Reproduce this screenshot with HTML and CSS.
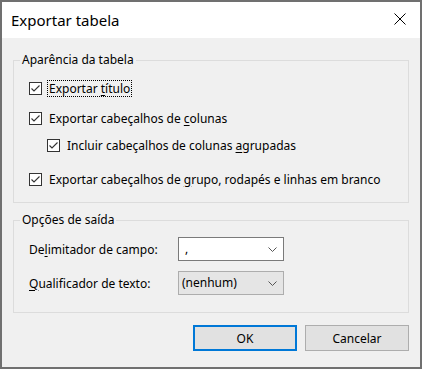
FILE: index.html
```html
<!DOCTYPE html>
<html lang="pt-BR">
<head>
  <meta charset="UTF-8" />
  <title>Exportar tabela</title>
  <link rel="stylesheet" href="styles.css">
</head>
<body>

  <div class="janela">
    <!-- BARRA DE TITULO -->
    <div class="titulo">
      <span class="titulo-texto">Exportar tabela</span>
      <span class="fechar" title="Fechar">
        <svg width="12" height="12" viewBox="0 0 12 12">
          <path d="M0.5 0.5 L11.5 11.5 M11.5 0.5 L0.5 11.5" stroke="#000" stroke-width="1" fill="none"/>
        </svg>
      </span>
    </div>

    <div class="conteudo">
      <fieldset class="grupo grupo-aparencia">
        <legend>Aparência da tabela</legend>

        <label class="opcao linha-1">
          <span class="caixa"><svg width="11" height="11" viewBox="0 0 11 11"><path d="M1.5 5.5 L4 8 L9.5 2.5" stroke="#333" stroke-width="1.1" fill="none"/></svg></span>
          <span class="rotulo foco">Exportar <u>t</u>ítulo</span>
        </label>

        <label class="opcao linha-2">
          <span class="caixa"><svg width="11" height="11" viewBox="0 0 11 11"><path d="M1.5 5.5 L4 8 L9.5 2.5" stroke="#333" stroke-width="1.1" fill="none"/></svg></span>
          <span class="rotulo">Exportar cabeçalhos de <u>c</u>olunas</span>
        </label>

        <label class="opcao linha-3 recuo">
          <span class="caixa"><svg width="11" height="11" viewBox="0 0 11 11"><path d="M1.5 5.5 L4 8 L9.5 2.5" stroke="#333" stroke-width="1.1" fill="none"/></svg></span>
          <span class="rotulo">Incluir cabeçalhos de colunas <u>a</u>grupadas</span>
        </label>

        <label class="opcao linha-4">
          <span class="caixa"><svg width="11" height="11" viewBox="0 0 11 11"><path d="M1.5 5.5 L4 8 L9.5 2.5" stroke="#333" stroke-width="1.1" fill="none"/></svg></span>
          <span class="rotulo">Exportar cabeçalhos de <u>g</u>rupo, rodapés e linhas em branco</span>
        </label>
      </fieldset>

      <fieldset class="grupo grupo-saida">
        <legend>Opções de saída</legend>

        <div class="campo campo-1">
          <span class="campo-rotulo">De<u>l</u>imitador de campo:</span>
          <div class="combo">
            <span class="combo-valor">,</span>
            <svg class="seta" width="9" height="5" viewBox="0 0 9 5"><path d="M0.5 0.5 L4.5 4.5 L8.5 0.5" stroke="#555" stroke-width="1" fill="none"/></svg>
          </div>
        </div>

        <div class="campo campo-2">
          <span class="campo-rotulo"><u>Q</u>ualificador de texto:</span>
          <div class="combo combo-lista">
            <span class="combo-valor">(nenhum)</span>
            <svg class="seta" width="9" height="5" viewBox="0 0 9 5"><path d="M0.5 0.5 L4.5 4.5 L8.5 0.5" stroke="#555" stroke-width="1" fill="none"/></svg>
          </div>
        </div>
      </fieldset>

      <div class="botoes">
        <button class="btn btn-ok">OK</button>
        <button class="btn">Cancelar</button>
      </div>
    </div>
  </div>

</body>
</html>
```

FILE: styles.css
```css
* {
  margin: 0;
  padding: 0;
  box-sizing: border-box;
}

body {
  font-family: 'Noto Sans', 'Open Sans', sans-serif;
  font-size: 12px;
  color: #000;
  background: #707070;
}

.janela {
  width: 422px;
  height: 369px;
  border: 2px solid #707070;
  display: flex;
  flex-direction: column;
}

/* barra de titulo */
.titulo {
  height: 36px;
  background: #fff;
  display: flex;
  align-items: center;
  justify-content: space-between;
  padding: 0 14px 0 9px;
}

.titulo-texto {
  font-size: 15px;
  padding-bottom: 1px;
}

.fechar {
  display: flex;
  padding-bottom: 2px;
}

.conteudo {
  flex: 1;
  background: #f0f0f0;
  padding: 14px 11px 0 11px;
}

/* grupos */
.grupo {
  border: 1px solid #dcdcdc;
  padding: 0 15px;
}

.grupo legend {
  margin-left: -9px;
  padding: 0 2px;
  line-height: 16px;
}

.grupo-aparencia {
  padding-bottom: 14px;
}

.grupo-saida {
  margin-top: 9px;
  padding-bottom: 17px;
}

/* checkboxes */
.opcao {
  display: flex;
  align-items: center;
  height: 18px;
}

.linha-1 { margin-top: 11px; }
.linha-2 { margin-top: 12px; }
.linha-3 { margin-top: 9px; }
.linha-4 { margin-top: 16px; }

.recuo {
  padding-left: 18px;
}

.caixa {
  width: 13px;
  height: 13px;
  border: 1px solid #333;
  background: #fff;
  display: flex;
  align-items: center;
  justify-content: center;
  margin-right: 5px;
}

.rotulo {
  border: 1px dotted transparent;
  padding: 0 1px;
  line-height: 15px;
}

.rotulo.foco {
  border-color: #000;
}

u {
  text-decoration-thickness: 1px;
  text-underline-offset: 2px;
}

/* campos */
.campo {
  display: flex;
  align-items: center;
}

.campo-1 { margin-top: 9px; }
.campo-2 { margin-top: 10px; }

.campo-rotulo {
  width: 149px;
}

.combo {
  width: 106px;
  height: 24px;
  background: #fff;
  border: 1px solid #7a7a7a;
  display: flex;
  align-items: center;
  justify-content: space-between;
  padding: 0 6px 0 6px;
}

.combo-lista {
  background: #e5e5e5;
  border-color: #adadad;
  padding-left: 3px;
}

.combo-valor {
  padding-bottom: 1px;
}

/* botoes */
.botoes {
  display: flex;
  justify-content: flex-end;
  gap: 8px;
  margin-top: 12px;
}

.btn {
  width: 104px;
  height: 26px;
  background: #e1e1e1;
  border: 1px solid #adadad;
  font-family: inherit;
  font-size: inherit;
  color: #000;
}

.btn-ok {
  border: 2px solid #0078d7;
}
```
